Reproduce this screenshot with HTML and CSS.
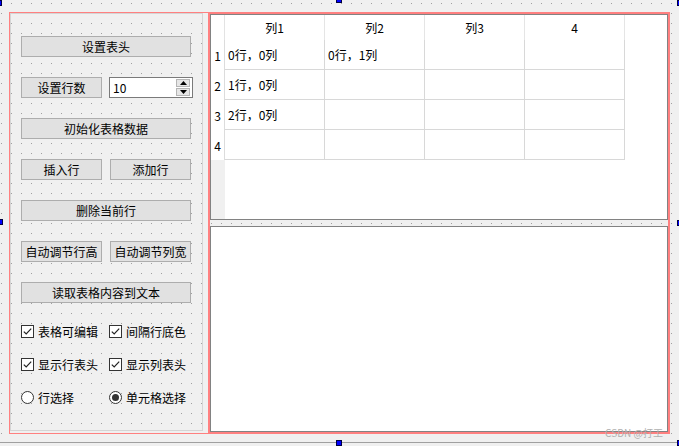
FILE: index.html
```html
<!DOCTYPE html>
<html lang="zh-CN">
<head>
<meta charset="utf-8">
<title>Qt Designer - 表格</title>
<link rel="stylesheet" href="styles.css">
</head>
<body>
<div class="canvas">
  <div class="form">
    <div class="layout">
      <div class="groupbox">
        <button class="btn full">设置表头</button>
        <div class="row">
          <button class="btn half">设置行数</button>
          <div class="spin">
            <span class="spin-val">10</span>
            <div class="spin-btns">
              <span class="spin-btn"><svg width="7" height="4" viewBox="0 0 7 4"><path d="M0 4 L3.5 0 L7 4 Z" fill="#000"/></svg></span>
              <span class="spin-btn"><svg width="7" height="4" viewBox="0 0 7 4"><path d="M0 0 L3.5 4 L7 0 Z" fill="#000"/></svg></span>
            </div>
          </div>
        </div>
        <button class="btn full">初始化表格数据</button>
        <div class="row gap8">
          <button class="btn half">插入行</button>
          <button class="btn half">添加行</button>
        </div>
        <button class="btn full">删除当前行</button>
        <div class="row gap8">
          <button class="btn half">自动调节行高</button>
          <button class="btn half">自动调节列宽</button>
        </div>
        <button class="btn full">读取表格内容到文本</button>
        <div class="opts">
          <div class="opt"><svg class="ind" width="13" height="13" viewBox="0 0 13 13"><rect x="0.5" y="0.5" width="12" height="12" fill="#fff" stroke="#333"/><path d="M2.8 6.6 L5.2 9 L10.2 3.6" fill="none" stroke="#222" stroke-width="1.2"/></svg><span>表格可编辑</span></div>
          <div class="opt"><svg class="ind" width="13" height="13" viewBox="0 0 13 13"><rect x="0.5" y="0.5" width="12" height="12" fill="#fff" stroke="#333"/><path d="M2.8 6.6 L5.2 9 L10.2 3.6" fill="none" stroke="#222" stroke-width="1.2"/></svg><span>间隔行底色</span></div>
          <div class="opt"><svg class="ind" width="13" height="13" viewBox="0 0 13 13"><rect x="0.5" y="0.5" width="12" height="12" fill="#fff" stroke="#333"/><path d="M2.8 6.6 L5.2 9 L10.2 3.6" fill="none" stroke="#222" stroke-width="1.2"/></svg><span>显示行表头</span></div>
          <div class="opt"><svg class="ind" width="13" height="13" viewBox="0 0 13 13"><rect x="0.5" y="0.5" width="12" height="12" fill="#fff" stroke="#333"/><path d="M2.8 6.6 L5.2 9 L10.2 3.6" fill="none" stroke="#222" stroke-width="1.2"/></svg><span>显示列表头</span></div>
          <div class="opt"><svg class="ind" width="13" height="13" viewBox="0 0 13 13"><circle cx="6.5" cy="6.5" r="6" fill="#fff" stroke="#333"/></svg><span>行选择</span></div>
          <div class="opt"><svg class="ind" width="13" height="13" viewBox="0 0 13 13"><circle cx="6.5" cy="6.5" r="6" fill="#fff" stroke="#333"/><circle cx="6.5" cy="6.5" r="3.5" fill="#333"/></svg><span>单元格选择</span></div>
        </div>
      </div>
      <div class="splitter">
        <div class="table">
          <div class="corner"></div>
          <div class="hh">列1</div>
          <div class="hh">列2</div>
          <div class="hh">列3</div>
          <div class="hh">4</div>
          <div class="hh-rest"></div>

          <div class="vh">1</div>
          <div class="cell">0行，0列</div>
          <div class="cell">0行，1列</div>
          <div class="cell"></div>
          <div class="cell"></div>
          <div class="rest"></div>

          <div class="vh">2</div>
          <div class="cell">1行，0列</div>
          <div class="cell"></div>
          <div class="cell"></div>
          <div class="cell"></div>
          <div class="rest"></div>

          <div class="vh">3</div>
          <div class="cell">2行，0列</div>
          <div class="cell"></div>
          <div class="cell"></div>
          <div class="cell"></div>
          <div class="rest"></div>

          <div class="vh">4</div>
          <div class="cell"></div>
          <div class="cell"></div>
          <div class="cell"></div>
          <div class="cell"></div>
          <div class="rest"></div>

          <div class="vh-empty"></div>
          <div class="empty"></div>
        </div>
        <div class="split-handle"></div>
        <div class="textedit"></div>
      </div>
    </div>
  </div>
  <span class="h h-tl"></span>
  <span class="h h-tc"></span>
  <span class="h h-tr"></span>
  <span class="h h-ml"></span>
  <span class="h h-mr"></span>
  <span class="h h-bc"></span>
  <span class="h h-br"></span>
  <span class="watermark">CSDN @打工</span>
</div>
</body>
</html>
```

FILE: styles.css
```css
html, body {
  margin: 0;
  padding: 0;
  background: #f0f0f0;
}
body {
  font-family: "Noto Sans CJK SC", "Microsoft YaHei", sans-serif;
  font-size: 12px;
  color: #000;
  overflow: hidden;
}
.canvas {
  position: relative;
  width: 679px;
  height: 446px;
  overflow: hidden;
  background: #f0f0f0;
}
.form {
  width: 677px;
  height: 430px;
  padding: 12px 0 0 9px;
  box-sizing: content-box;
  width: 668px;
  border-bottom: 1px solid #a0a0a0;
  background-color: #f0f0f0;
  background-image:
    linear-gradient(to right, transparent 1px, #f0f0f0 1px),
    linear-gradient(to bottom, #a0a0a0 1px, #f0f0f0 1px);
  background-size: 10px 10px, 10px 10px;
  background-position: 1px 3px, 1px 3px;
}
.layout {
  display: flex;
  align-items: flex-start;
  box-sizing: border-box;
  width: 661px;
  height: 422px;
  border: 1px solid #ff8080;
  border-right: none;
}
.groupbox {
  box-sizing: border-box;
  width: 193px;
  height: 418px;
  margin-right: 5px;
  border: 1px solid #d5d5d5;
  padding: 22px 0 0 10px;
  display: flex;
  flex-direction: column;
  gap: 20px;
}
.btn {
  box-sizing: border-box;
  height: 21px;
  margin: 0;
  padding: 0;
  border: 1px solid #adadad;
  background: #e1e1e1;
  font: inherit;
  font-size: 12px;
  line-height: 19px;
  color: #000;
  text-align: center;
  white-space: nowrap;
  overflow: hidden;
}
.full { width: 170px; }
.half { width: 81px; }
.row {
  display: flex;
  gap: 7px;
}
.row.gap8 { gap: 8px; }
.spin {
  box-sizing: border-box;
  width: 84px;
  height: 21px;
  border: 1px solid #7a7a7a;
  background: #fff;
  display: flex;
  align-items: center;
  justify-content: space-between;
  padding: 0 2px 0 3px;
}
.spin-val { line-height: 19px; }
.spin-btns {
  display: flex;
  flex-direction: column;
  gap: 1px;
}
.spin-btn {
  box-sizing: border-box;
  width: 14px;
  height: 8px;
  border: 1px solid #b5b5b5;
  background: #e6e6e6;
  display: flex;
  align-items: center;
  justify-content: center;
}
.spin-btn svg { display: block; }
.opts {
  margin-top: -2px;
  display: grid;
  grid-template-columns: 88px 1fr;
  grid-auto-rows: 20px;
  row-gap: 13px;
}
.opt {
  display: flex;
  align-items: center;
  gap: 4px;
  white-space: nowrap;
}
.ind { display: block; flex: none; }
.splitter {
  box-sizing: border-box;
  width: 462px;
  height: 422px;
  margin-top: -1px;
  border: 2px solid #ff8080;
  display: flex;
  flex-direction: column;
}
.table {
  box-sizing: border-box;
  height: 206px;
  border: 1px solid #828282;
  background: #fff;
  display: grid;
  grid-template-columns: 14px 100px 100px 100px 100px 1fr;
  grid-template-rows: 25px 30px 30px 30px 30px 1fr;
  overflow: hidden;
}
.corner {
  border-right: 1px solid #e3e3e3;
}
.hh {
  border-right: 1px solid #e5e5e5;
  display: flex;
  align-items: center;
  justify-content: center;
  white-space: nowrap;
}
.vh {
  border-right: 1px solid #dcdcdc;
  display: flex;
  align-items: center;
  justify-content: center;
}
.cell {
  border-right: 1px solid #d8d8d8;
  border-bottom: 1px solid #d8d8d8;
  display: flex;
  align-items: center;
  padding-left: 3px;
  white-space: nowrap;
}
.vh-empty {
  background: #f0f0f0;
}
.empty {
  grid-column: 2 / 7;
}
.split-handle {
  height: 6px;
  flex: none;
}
.textedit {
  box-sizing: border-box;
  height: 206px;
  border: 1px solid #828282;
  background: #fff;
}
.h {
  position: absolute;
  box-sizing: border-box;
  width: 6px;
  height: 6px;
  background: #0000ff;
  border: 1px solid #000040;
}
.h-tl { left: -4px; top: 0; }
.h-tc { left: 336px; top: -3px; }
.h-tr { left: 677px; top: 0; }
.h-ml { left: -3px; top: 219px; }
.h-mr { left: 677px; top: 220px; }
.h-bc { left: 336px; top: 440px; }
.h-br { left: 677px; top: 440px; }
.watermark {
  position: absolute;
  right: 16px;
  bottom: 8px;
  font-size: 10px;
  line-height: 11px;
  color: #b0b0b0;
  white-space: nowrap;
}
```
